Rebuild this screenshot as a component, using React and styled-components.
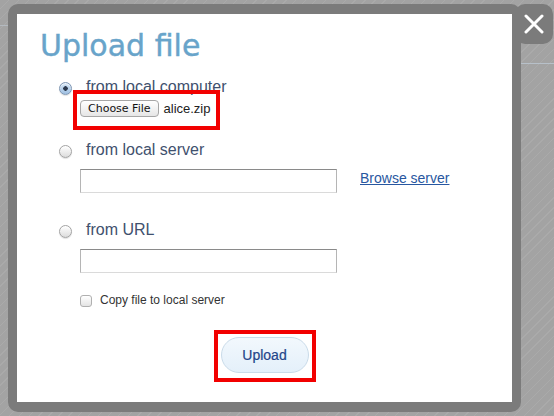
import React from "react";
import styled, { createGlobalStyle } from "styled-components";

const GlobalStyle = createGlobalStyle`
  html, body {
    margin: 0;
    padding: 0;
  }
  body {
    width: 554px;
    height: 416px;
    overflow: hidden;
    font-family: "Liberation Sans", Arial, sans-serif;
  }
`;

const Page = styled.div`
  box-sizing: border-box;
  width: 554px;
  height: 416px;
  padding: 4px 0 0 8px;
  background:
    linear-gradient(#b7c0c9, #b7c0c9) 521px 63px / 33px 1px no-repeat,
    linear-gradient(#b3b9bf, #b3b9bf) 0 25px / 8px 1px no-repeat,
    repeating-linear-gradient(135deg, #a3a3a3 0 6px, #aaaaaa 6px 7px);
`;

const Frame = styled.div`
  position: relative;
  box-sizing: border-box;
  width: 513px;
  height: 408px;
  border-style: solid;
  border-color: #7b7b7b;
  border-width: 10px 9px;
  border-radius: 10px;
  background: #fff;
  display: flex;
  flex-direction: column;
`;

const CloseTab = styled.button`
  position: absolute;
  top: -10px;
  right: -41px;
  width: 38px;
  height: 40px;
  padding: 0;
  border: 0;
  border-radius: 10px;
  background: #7b7b7b;
  display: flex;
  align-items: center;
  justify-content: center;
  cursor: pointer;
`;

const Title = styled.h1`
  margin: 14px 0 0;
  padding-left: 23px;
  font-family: "DejaVu Sans", sans-serif;
  font-weight: normal;
  font-size: 30px;
  line-height: 36px;
  color: #68a4ca;
  -webkit-text-stroke: 0.4px #68a4ca;
`;

const Form = styled.div`
  display: flex;
  flex-direction: column;
  align-items: flex-start;
  padding-left: 42px;
`;

const OptionRow = styled.label`
  display: flex;
  align-items: flex-start;
  gap: 14px;
  margin-top: ${(p) => p.$top}px;
  font-size: 16px;
  line-height: 18px;
  color: #3f516e;
`;

const Radio = styled.span`
  box-sizing: border-box;
  width: 13px;
  height: 13px;
  margin-top: 4px;
  border-radius: 50%;
  border: 1px solid ${(p) => (p.$checked ? "#7e96b3" : "#a3a3a3")};
  background: ${(p) =>
    p.$checked
      ? "radial-gradient(circle, #2c3a4e 0 2px, transparent 2.5px), linear-gradient(#d3e4f5, #9fc0e2)"
      : "linear-gradient(#ffffff, #dcdcdc)"};
  box-shadow: inset 0 1px 1px rgba(255, 255, 255, 0.8), 0 1px 1px rgba(0, 0, 0, 0.12);
  flex: none;
`;

const Highlight = styled.div`
  display: flex;
  align-items: flex-start;
  gap: ${(p) => p.$gap || 0}px;
  margin-top: ${(p) => p.$top}px;
  margin-left: ${(p) => p.$left}px;
  padding: ${(p) => p.$pad};
  border: 4px solid #f20000;
`;

const FileButton = styled.button`
  box-sizing: border-box;
  height: 17px;
  padding: 0 7px;
  border: 1px solid #a6a6a6;
  border-radius: 4px;
  background: linear-gradient(#ffffff, #e6e6e6);
  font-family: "DejaVu Sans", sans-serif;
  font-size: 11px;
  line-height: 15px;
  color: #111;
`;

const FileName = styled.span`
  font-size: 13px;
  line-height: 17px;
  color: #222;
`;

const FieldRow = styled.div`
  display: flex;
  align-items: flex-start;
  gap: 23px;
  margin-top: 10px;
  margin-left: 21px;
`;

const TextField = styled.input`
  box-sizing: border-box;
  width: 257px;
  height: 24px;
  margin: 0;
  border: 1px solid #b5b5b5;
  border-top-color: #8a8a8a;
  border-bottom-color: #dadada;
  background: #fff;
  outline: none;
`;

const Link = styled.a`
  font-size: 14px;
  line-height: 18px;
  color: #2857a0;
  text-decoration: underline;
`;

const CheckRow = styled.label`
  display: flex;
  align-items: flex-start;
  gap: 8px;
  margin-top: 20px;
  margin-left: 21px;
  font-size: 12px;
  line-height: 14px;
  color: #333;
`;

const Check = styled.span`
  box-sizing: border-box;
  width: 12px;
  height: 12px;
  margin-top: 2px;
  border: 1px solid #b0b0b0;
  border-radius: 3px;
  background: linear-gradient(#ffffff, #e4e4e4);
  flex: none;
`;

const Footer = styled.div`
  display: flex;
  justify-content: center;
  margin-top: 23px;
`;

const UploadButton = styled.button`
  box-sizing: border-box;
  width: 88px;
  height: 36px;
  border: 1px solid #c9dbe9;
  border-radius: 18px;
  background: linear-gradient(#f2f8fd, #e4f0fa);
  font-family: "Liberation Sans", Arial, sans-serif;
  font-size: 14px;
  color: #24468a;
  -webkit-text-stroke: 0.2px #24468a;
`;

const CloseIcon = () => (
  <svg width="20" height="20" viewBox="0 0 20 20">
    <path d="M2 2 L18 18 M18 2 L2 18" stroke="#fff" strokeWidth="3" strokeLinecap="round" fill="none" />
  </svg>
);

export default function App() {
  return (
    <>
      <GlobalStyle />
      <Page>
        <Frame>
          <CloseTab aria-label="Close">
            <CloseIcon />
          </CloseTab>
          <Title>Upload file</Title>
          <Form>
            <OptionRow $top={14}>
              <Radio $checked />
              from local computer
            </OptionRow>
            <Highlight $top={-6} $left={14} $gap={5} $pad="6px 6px 9px 3px">
              <FileButton>Choose File</FileButton>
              <FileName>alice.zip</FileName>
            </Highlight>
            <OptionRow $top={11}>
              <Radio />
              from local server
            </OptionRow>
            <FieldRow>
              <TextField type="text" />
              <Link href="#">Browse server</Link>
            </FieldRow>
            <OptionRow $top={28}>
              <Radio />
              from URL
            </OptionRow>
            <FieldRow>
              <TextField type="text" />
            </FieldRow>
            <CheckRow>
              <Check />
              Copy file to local server
            </CheckRow>
          </Form>
          <Footer>
            <Highlight $top={0} $left={0} $pad="3px 3px 5px 3px">
              <UploadButton>Upload</UploadButton>
            </Highlight>
          </Footer>
        </Frame>
      </Page>
    </>
  );
}
